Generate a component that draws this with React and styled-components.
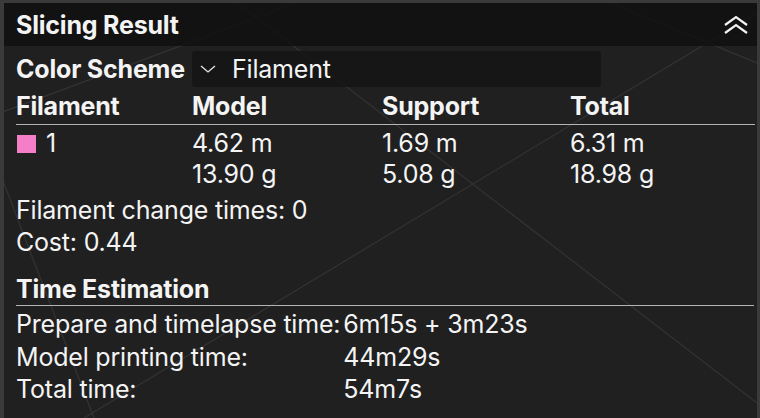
import React from "react";
import styled, { createGlobalStyle } from "styled-components";

const Global = createGlobalStyle`
  html, body { margin: 0; padding: 0; background: #3a3a3a; }
  body { font-family: Inter, "Noto Sans", sans-serif; color: #f4f4f4; }
`;

const Stage = styled.div`
  width: 760px;
  height: 418px;
  padding: 3px 3px 0 4px;
  box-sizing: border-box;
  background: #3a3a3a;
  overflow: hidden;
`;

const Panel = styled.div`
  position: relative;
  height: 100%;
  background: #202020;
  overflow: hidden;
`;

const Lines = styled.svg`
  position: absolute;
  inset: 0;
  pointer-events: none;
`;

const Content = styled.div`
  position: relative;
  display: flex;
  flex-direction: column;
  font-size: 25px;
  letter-spacing: -0.2px;
`;

const Header = styled.div`
  height: 43px;
  background: rgba(16, 16, 16, 0.85);
  display: flex;
  align-items: center;
  justify-content: space-between;
  padding: 0 7px 0 12px;
  font-weight: 700;
`;

const Body = styled.div`
  padding: 0 0 0 12px;
  display: flex;
  flex-direction: column;
`;

const SchemeRow = styled.div`
  display: flex;
  align-items: center;
  height: 36px;
  margin-top: 5px;
`;

const Label = styled.div`
  width: 176px;
  font-weight: 700;
`;

const Dropdown = styled.div`
  width: 409px;
  height: 36px;
  background: rgba(20, 20, 20, 0.8);
  border-radius: 3px;
  display: flex;
  align-items: center;
  gap: 16px;
  padding-left: 8px;
  box-sizing: border-box;
`;

const Grid = styled.div`
  display: grid;
  grid-template-columns: 176px 190px 188px 1fr;
`;

const HeadCell = styled.div`
  height: 37px;
  display: flex;
  align-items: center;
  font-weight: 700;
  border-bottom: 1px solid #b4b4b4;
  margin-right: ${(p) => (p.$last ? "2px" : "0")};
`;

const Cell = styled.div`
  padding-top: 3px;
  line-height: 31px;
  display: flex;
  flex-direction: column;
`;

const IdCell = styled(Cell)`
  flex-direction: row;
  align-items: flex-start;
`;

const Swatch = styled.span`
  width: 19px;
  height: 18px;
  background: #f47fc8;
  margin: 7px 10px 0 1px;
`;

const Line = styled.div`
  line-height: 32px;
`;

const Stats = styled.div`
  margin-top: 4px;
`;

const Section = styled.div`
  margin-top: 15px;
  height: 32px;
  display: flex;
  align-items: center;
  font-weight: 700;
  border-bottom: 1px solid #b4b4b4;
  margin-right: 3px;
`;

const TimeGrid = styled.div`
  display: grid;
  grid-template-columns: max-content 1fr;
  column-gap: 3px;
  padding-top: 2px;
  line-height: 32.5px;
`;

const ChevronDown = () => (
  <svg width="16" height="8" viewBox="0 0 16 8">
    <path d="M1 1 L8 7 L15 1" fill="none" stroke="#e8e8e8" strokeWidth="1.3" />
  </svg>
);

const Collapse = () => (
  <svg width="28" height="20" viewBox="0 0 28 20">
    <path d="M3 10 L14 2 L25 10" fill="none" stroke="#f2f2f2" strokeWidth="2.2" />
    <path d="M3 18 L14 10 L25 18" fill="none" stroke="#f2f2f2" strokeWidth="2.2" />
  </svg>
);

const rows = [
  { label: "Prepare and timelapse time:", value: "6m15s + 3m23s" },
  { label: "Model printing time:", value: "44m29s" },
  { label: "Total time:", value: "54m7s" },
];

export default function App() {
  return (
    <Stage>
      <Global />
      <Panel>
        <Lines width="753" height="415">
          <g stroke="#333" strokeWidth="1.2" fill="none">
            <line x1="-4" y1="110" x2="300" y2="-3" />
            <line x1="80" y1="415" x2="753" y2="10" />
            <line x1="230" y1="-3" x2="753" y2="400" />
            <line x1="-4" y1="170" x2="90" y2="415" />
            <line x1="600" y1="-3" x2="753" y2="60" />
          </g>
        </Lines>
        <Content>
          <Header>
            <span>Slicing Result</span>
            <Collapse />
          </Header>
          <Body>
            <SchemeRow>
              <Label>Color Scheme</Label>
              <Dropdown>
                <ChevronDown />
                <span>Filament</span>
              </Dropdown>
            </SchemeRow>
            <Grid>
              <HeadCell>Filament</HeadCell>
              <HeadCell>Model</HeadCell>
              <HeadCell>Support</HeadCell>
              <HeadCell $last>Total</HeadCell>
              <IdCell>
                <Swatch />
                <span>1</span>
              </IdCell>
              <Cell>
                <span>4.62 m</span>
                <span>13.90 g</span>
              </Cell>
              <Cell>
                <span>1.69 m</span>
                <span>5.08 g</span>
              </Cell>
              <Cell>
                <span>6.31 m</span>
                <span>18.98 g</span>
              </Cell>
            </Grid>
            <Stats>
              <Line>Filament change times: 0</Line>
              <Line>Cost: 0.44</Line>
            </Stats>
            <Section>Time Estimation</Section>
            <TimeGrid>
              {rows.map((r) => (
                <React.Fragment key={r.label}>
                  <span>{r.label}</span>
                  <span>{r.value}</span>
                </React.Fragment>
              ))}
            </TimeGrid>
          </Body>
        </Content>
      </Panel>
    </Stage>
  );
}
